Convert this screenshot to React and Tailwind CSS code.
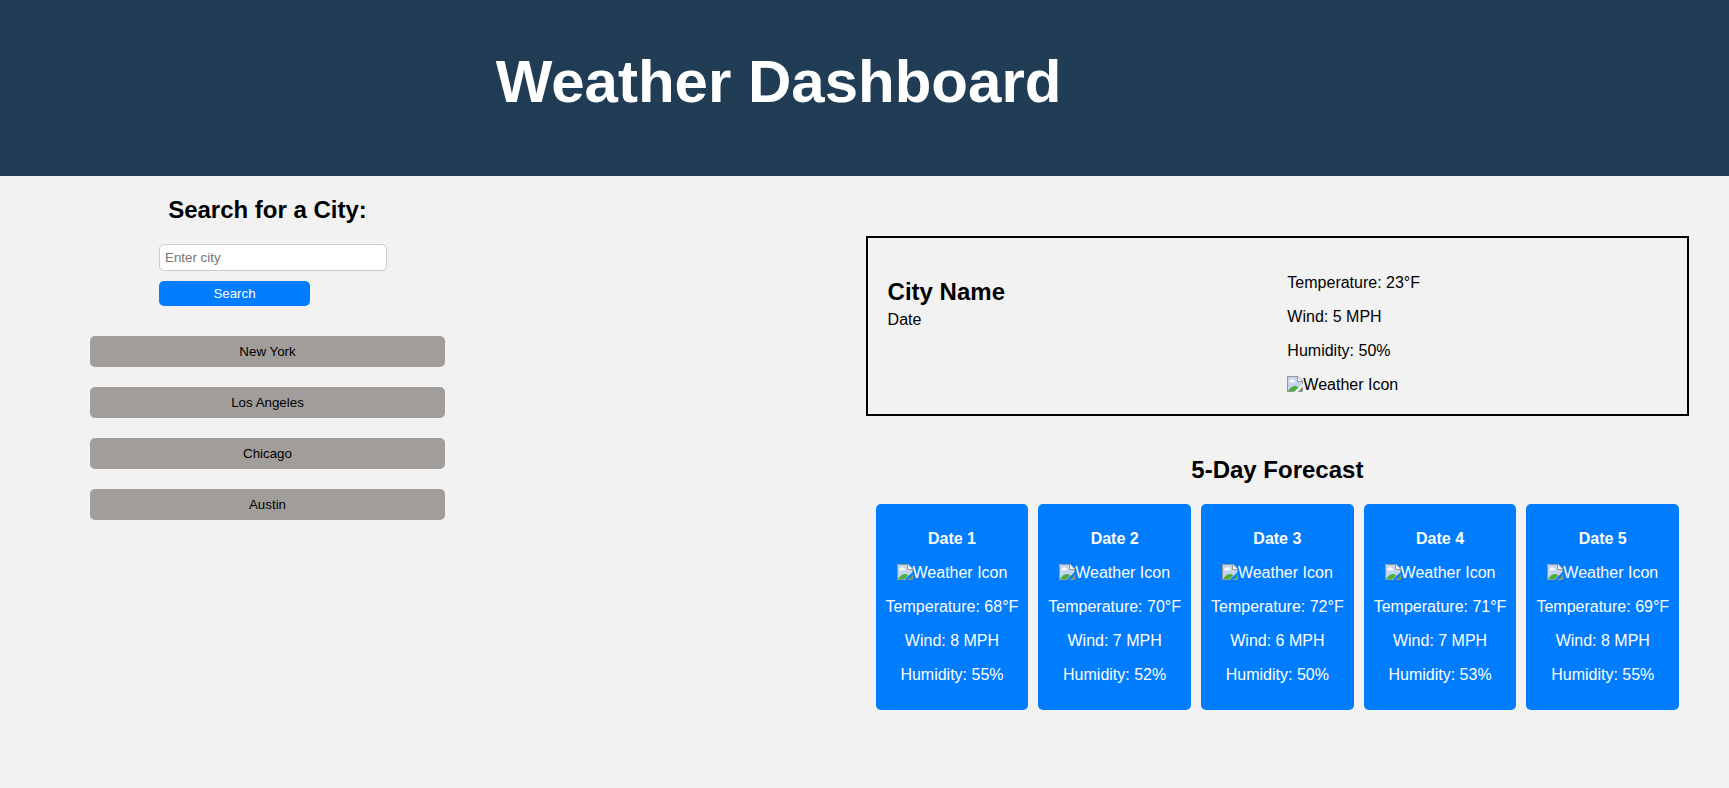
const cities = ['New York', 'Los Angeles', 'Chicago', 'Austin'];

const forecast = [
  { date: 'Date 1', temp: 68, wind: 8, humidity: 55 },
  { date: 'Date 2', temp: 70, wind: 7, humidity: 52 },
  { date: 'Date 3', temp: 72, wind: 6, humidity: 50 },
  { date: 'Date 4', temp: 71, wind: 7, humidity: 53 },
  { date: 'Date 5', temp: 69, wind: 8, humidity: 55 },
];

// Placeholder thumbnail: a torn landscape picture followed by its label.
function WeatherIcon() {
  return (
    <span className="inline-flex h-[18px] items-start">
      <svg className="block h-4 w-4 shrink-0" viewBox="0 0 16 16">
        <path d="M0 0H11L16 5V7.5L7.5 16H0Z" fill="#e9f0fb" />
        <path d="M1 1H10.5V5.5H15V8L8 15H1Z" fill="#c3d5f2" />
        <path d="M2.500 6.200a1.300 1.300 0 0 1 1-2 1.900 1.900 0 0 1 3.400 0 1.200 1.200 0 0 1 1 2Z" fill="#fff" />
        <path d="M1 15C3 11.8 5.300 9.900 8 9.900c1.500 0 2.700.5 3.500 1.600L8 15Z" fill="#4caf3c" />
        <path d="M.5 16V.5H11L15.500 5V8M0 15.500H7.500" fill="none" stroke="#979797" />
        <path d="M11 1.200L14.800 5H11Z" fill="#fff" />
        <path d="M10.500 .5V5.500H15.500" fill="none" stroke="#979797" />
        <path d="M15.200 11.500V15.200H11.500Z" fill="#4caf3c" />
        <path d="M15.500 10.800V15.500H10.800" fill="none" stroke="#979797" />
      </svg>
      <span>Weather Icon</span>
    </span>
  );
}

export default function App() {
  return (
    <div className="min-h-screen bg-[#f2f2f2] font-['Liberation_Sans',Arial,sans-serif] text-base leading-[18px] text-black">
      <header className="h-44 bg-[#213d55] pt-12">
        <h1 className="w-[90%] pl-px text-center text-[60px] leading-[68px] font-bold text-white">
          Weather Dashboard
        </h1>
      </header>
      <div className="flex items-start justify-between pr-[39.9px]">
        <aside className="ml-[90px] w-[355px] pt-5">
          <h2 className="text-center text-2xl leading-[28px] font-bold">Search for a City:</h2>
          <form className="mt-5 ml-[69px] flex flex-col items-start gap-2.5">
            <input
              type="text"
              placeholder="Enter city"
              className="h-[27px] w-[228px] rounded-[5px] border border-[#ccc] bg-white px-[5px] text-[13.333px] placeholder:text-[#757575]"
            />
            <button
              type="button"
              className="h-[25px] w-[151px] rounded-[5px] bg-[#007dff] text-[13.333px] leading-[15px] text-white"
            >
              Search
            </button>
          </form>
          <div className="mt-[30px] flex flex-col gap-5">
            {cities.map((city) => (
              <button
                key={city}
                type="button"
                className="h-[31px] w-full rounded-[5px] bg-[#a19d9b] text-[13.333px] leading-[15px]"
              >
                {city}
              </button>
            ))}
          </div>
        </aside>
        <main className="w-[823.5px] pt-[60px]">
          <section className="grid h-[180px] grid-cols-2 gap-5 border-2 border-black p-5">
            <div className="pt-5">
              <h2 className="text-2xl leading-[27px] font-bold">City Name</h2>
              <p className="mt-1.5">Date</p>
            </div>
            <div className="flex flex-col items-start gap-4 pt-4">
              <p>Temperature: 23°F</p>
              <p>Wind: 5 MPH</p>
              <p>Humidity: 50%</p>
              <WeatherIcon />
            </div>
          </section>
          <section className="px-2.5 pt-10">
            <h2 className="text-center text-2xl leading-[28px] font-bold">5-Day Forecast</h2>
            <div className="mt-5 grid grid-cols-5 gap-2.5">
              {forecast.map((day) => (
                <article
                  key={day.date}
                  className="flex h-[206px] flex-col items-center gap-4 rounded-[5px] bg-[#007dff] pt-[26px] whitespace-nowrap text-white"
                >
                  <h3 className="font-bold">{day.date}</h3>
                  <WeatherIcon />
                  <p>Temperature: {day.temp}°F</p>
                  <p>Wind: {day.wind} MPH</p>
                  <p>Humidity: {day.humidity}%</p>
                </article>
              ))}
            </div>
          </section>
        </main>
      </div>
    </div>
  );
}
